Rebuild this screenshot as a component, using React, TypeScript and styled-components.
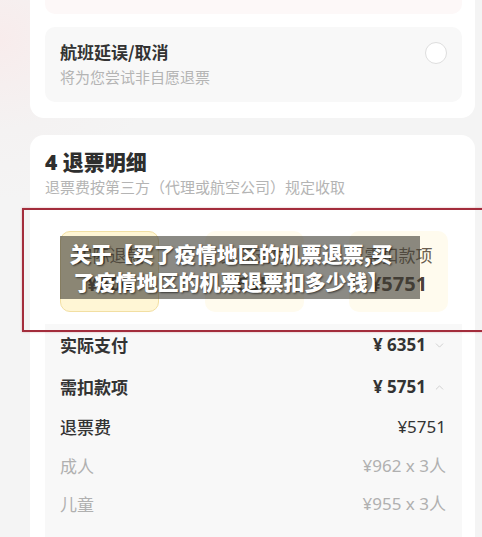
import styled, { createGlobalStyle } from "styled-components";
import { ChevronDown, ChevronUp } from "lucide-react";

const GlobalStyle = createGlobalStyle`
    html, body {
        margin: 0;
        padding: 0;
    }
    body {
        width: 482px;
        height: 537px;
        overflow: hidden;
        background: radial-gradient(circle at 0 40px, #f8ecec 0, #f4f2f2 90px, #f4f4f4 160px);
        font-family: "Noto Sans", "Noto Sans CJK SC", sans-serif;
        color: #333;
    }
`;

const Page = styled.div`
    display: flex;
    flex-direction: column;
    gap: 17px;
    padding: 0 7px 0 30px;
    margin-top: -20px;
`;

const Card = styled.div`
    background: #fff;
    border-radius: 14px;
    padding: 0 13px 16px 15px;
    display: flex;
    flex-direction: column;
`;

const TopStrip = styled.div`
    height: 34px;
    background: #fdf8f8;
    border-radius: 0 0 10px 10px;
    margin-bottom: 13px;
`;

const OptionBox = styled.div`
    height: 75px;
    background: #f8f8f8;
    border-radius: 10px;
    padding: 0 15px;
    display: flex;
    align-items: center;
    justify-content: space-between;
`;

const OptionText = styled.div`
    display: flex;
    flex-direction: column;
    gap: 1px;
    margin-top: -3px;
`;

const OptionTitle = styled.div`
    font-family: "Noto Sans CJK SC", sans-serif;
    font-size: 17px;
    font-weight: 700;
    line-height: 26px;
    color: #333;
`;

const OptionSub = styled.div`
    font-family: "Noto Sans CJK SC", sans-serif;
    font-size: 15px;
    line-height: 22px;
    color: #b4b4b4;
`;

const Radio = styled.div`
    width: 20px;
    height: 20px;
    border-radius: 50%;
    border: 1.5px solid #dedede;
    background: #fff;
    margin-bottom: 24px;
`;

const DetailCard = styled.div`
    background: #fff;
    border-radius: 14px;
    padding: 13px 13px 0 15px;
    display: flex;
    flex-direction: column;
    height: 420px;
`;

const Heading = styled.div`
    font-family: "Noto Sans", "Noto Sans CJK SC", sans-serif;
    font-size: 21px;
    font-weight: 900;
    line-height: 28px;
    color: #2e2e2e;
`;

const SubHeading = styled.div`
    font-family: "Noto Sans CJK SC", sans-serif;
    font-size: 15px;
    line-height: 22px;
    color: #b4b4b4;
    margin-bottom: 12px;
`;

const TileSection = styled.div`
    position: relative;
    height: 114px;
    padding: 21px 14px 0 15px;
    box-sizing: border-box;
    display: flex;
    justify-content: space-between;
    align-items: flex-start;

    &::after {
        content: "";
        position: absolute;
        left: -23px;
        right: -40px;
        top: -2px;
        bottom: -8px;
        border: 2px solid #a32d3c;
        box-shadow: 0 0 2px rgba(163, 45, 60, 0.35);
        pointer-events: none;
    }
`;

const Tile = styled.div<{ $active?: boolean }>`
    width: 99px;
    height: 81px;
    box-sizing: border-box;
    border-radius: 10px;
    background: ${(p) => (p.$active ? "#fff6d5" : "#fffbee")};
    border: 1.5px solid ${(p) => (p.$active ? "#f2dfa2" : "transparent")};
    display: flex;
    flex-direction: column;
    align-items: center;
    justify-content: center;
    gap: 3px;
`;

const TileLabel = styled.div`
    font-family: "Liberation Serif", "Noto Sans CJK SC", serif;
    font-size: 17px;
    line-height: 22px;
    color: #6b5e50;
`;

const TileValue = styled.div`
    font-family: "Noto Sans", sans-serif;
    font-size: 20px;
    font-weight: 700;
    line-height: 26px;
    color: #4a4038;
`;

const Caption = styled.div`
    position: absolute;
    left: 15px;
    top: 26px;
    width: 360px;
    height: 63px;
    box-sizing: border-box;
    padding: 3px 18px 0 0;
    background: rgba(62, 60, 52, 0.6);
    z-index: 1;
    text-align: center;
    white-space: nowrap;
    font-family: "Noto Sans CJK SC", sans-serif;
    font-size: 21px;
    font-weight: 900;
    line-height: 28px;
    color: #fff;
    text-shadow: 1px 1px 2px rgba(0, 0, 0, 0.6);
`;

const RowList = styled.div`
    background: #f8f8f8;
    flex: 1;
    display: flex;
    flex-direction: column;
`;

const Row = styled.div<{ $tall?: boolean }>`
    height: ${(p) => (p.$tall ? "42px" : "38.5px")};
    padding: 0 16px 0 15px;
    display: flex;
    align-items: center;
    justify-content: space-between;
`;

const RowLabel = styled.div<{ $tone: "strong" | "mid" | "light" }>`
    font-family: "Noto Sans CJK SC", sans-serif;
    font-size: 17px;
    line-height: 26px;
    font-weight: ${(p) => (p.$tone === "strong" ? 700 : p.$tone === "mid" ? 500 : 400)};
    color: ${(p) => (p.$tone === "light" ? "#b0b0b0" : "#333")};
`;

const RowValue = styled.div<{ $tone: "strong" | "mid" | "light" }>`
    display: flex;
    align-items: center;
    gap: 7px;
    font-family: "Noto Sans", "Noto Sans CJK SC", sans-serif;
    font-size: 17px;
    line-height: 26px;
    font-weight: ${(p) => (p.$tone === "strong" ? 700 : 400)};
    color: ${(p) => (p.$tone === "light" ? "#b0b0b0" : "#333")};
    svg {
        color: #c8c8c8;
    }
`;

const rows = [
    { label: "实际支付", value: "¥ 6351", tone: "strong", chevron: "down" },
    { label: "需扣款项", value: "¥ 5751", tone: "strong", chevron: "up" },
    { label: "退票费", value: "¥5751", tone: "mid" },
    { label: "成人", value: "¥962 x 3人", tone: "light" },
    { label: "儿童", value: "¥955 x 3人", tone: "light" },
] as const;

export default function App() {
    return (
        <>
            <GlobalStyle />
            <Page>
                <Card>
                    <TopStrip />
                    <OptionBox>
                        <OptionText>
                            <OptionTitle>航班延误/取消</OptionTitle>
                            <OptionSub>将为您尝试非自愿退票</OptionSub>
                        </OptionText>
                        <Radio />
                    </OptionBox>
                </Card>
                <DetailCard>
                    <Heading>4 退票明细</Heading>
                    <SubHeading>退票费按第三方（代理或航空公司）规定收取</SubHeading>
                    <TileSection>
                        <Tile $active>
                            <TileLabel>实际退款</TileLabel>
                            <TileValue>¥600</TileValue>
                        </Tile>
                        <Tile>
                            <TileLabel>实际支付</TileLabel>
                            <TileValue>¥6351</TileValue>
                        </Tile>
                        <Tile>
                            <TileLabel>需扣款项</TileLabel>
                            <TileValue>¥5751</TileValue>
                        </Tile>
                        <Caption>
                            关于【买了疫情地区的机票退票,买
                            <br />
                            了疫情地区的机票退票扣多少钱】
                        </Caption>
                    </TileSection>
                    <RowList>
                        {rows.map((r) => (
                            <Row key={r.label} $tall={r.tone === "strong"}>
                                <RowLabel $tone={r.tone}>{r.label}</RowLabel>
                                <RowValue $tone={r.tone}>
                                    {r.value}
                                    {"chevron" in r && r.chevron === "down" && (
                                        <ChevronDown size={13} strokeWidth={1.5} />
                                    )}
                                    {"chevron" in r && r.chevron === "up" && (
                                        <ChevronUp size={13} strokeWidth={1.5} />
                                    )}
                                </RowValue>
                            </Row>
                        ))}
                    </RowList>
                </DetailCard>
            </Page>
        </>
    );
}
